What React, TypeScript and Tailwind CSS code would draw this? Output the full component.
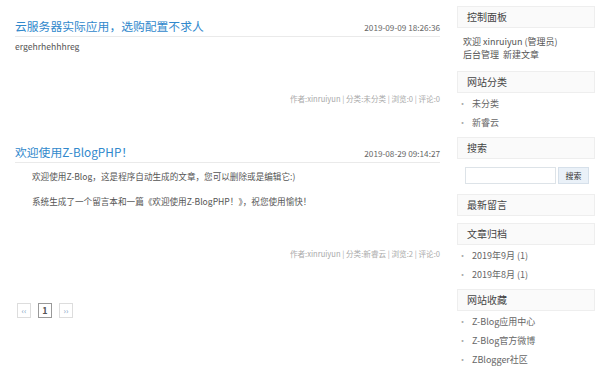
import React from "react";

const posts = [
  {
    title: "云服务器实际应用，选购配置不求人",
    date: "2019-09-09 18:26:36",
    body: ["ergehrhehhhreg"],
    indent: false,
    meta: "作者:xinruiyun | 分类:未分类 | 浏览:0 | 评论:0",
  },
  {
    title: "欢迎使用Z-BlogPHP！",
    date: "2019-08-29 09:14:27",
    body: [
      "欢迎使用Z-Blog，这是程序自动生成的文章，您可以删除或是编辑它:)",
      "系统生成了一个留言本和一篇《欢迎使用Z-BlogPHP！》，祝您使用愉快！",
    ],
    indent: true,
    meta: "作者:xinruiyun | 分类:新睿云 | 浏览:2 | 评论:0",
  },
];

function SideHead({ title }: { title: string }) {
  return (
    <div className="h-[22px] border border-[#eeeeee] bg-[#fafafa] pl-[9px] text-[10px] leading-[20px] text-[#444]">
      {title}
    </div>
  );
}

function SideList({ items }: { items: string[] }) {
  return (
    <ul className="pt-[1px] pb-[5px] pl-[1px]">
      {items.map((it) => (
        <li key={it} className="flex h-[19px] items-center text-[9px] text-[#666]">
          <span className="mr-[5px] text-[#aaa]">·</span>
          {it}
        </li>
      ))}
    </ul>
  );
}

export default function App() {
  return (
    <div
      className="flex h-[371px] w-[611px] bg-white"
      style={{ fontFamily: '"Noto Sans CJK SC", "Liberation Sans", sans-serif' }}
    >
      {/* Main column */}
      <main className="w-[440px] pl-[15px] pt-[17px]">
        {posts.map((p, i) => (
          <article key={i} className={i === 0 ? "mb-[38px]" : "mb-[43px]"}>
            <header className="flex h-[20px] items-start justify-between border-b border-[#eaeaea]">
              <h2 className="text-[11.8px] leading-[18px] text-[#3088cc]">{p.title}</h2>
              <span className="pt-[3px] text-[8.2px] leading-[14px] text-[#666]">{p.date}</span>
            </header>
            <div className={p.indent ? "pl-[17px] pt-[6px]" : "pt-[2px]"}>
              {p.body.map((b, j) => (
                <p
                  key={j}
                  className={
                    "text-[8.6px] leading-[14px] text-[#555] " +
                    (p.indent && j === 0 ? "mb-[11px]" : "")
                  }
                >
                  {b}
                </p>
              ))}
            </div>
            <div className="mt-[40px] text-right text-[7.6px] leading-[12px] text-[#aaa]">
              {p.meta}
            </div>
          </article>
        ))}

        {/* Pagination */}
        <div className="flex gap-[7px] pl-[2px]">
          <span className="flex h-[15px] w-[14px] items-center justify-center border border-[#dddddd] text-[8px] text-[#7a9cc0]">
            ‹‹
          </span>
          <span className="flex h-[15px] w-[14px] items-center justify-center border border-[#999] text-[9px] font-bold text-[#555]">
            1
          </span>
          <span className="flex h-[15px] w-[14px] items-center justify-center border border-[#dddddd] text-[8px] text-[#7a9cc0]">
            ››
          </span>
        </div>
      </main>

      {/* Sidebar */}
      <aside className="ml-[17px] w-[138px] pt-[6px]">
        <SideHead title="控制面板" />
        <div className="pt-[7px] pb-[10px] pl-[6px] text-[9px] leading-[13px] text-[#555]">
          <div>欢迎 xinruiyun (管理员)</div>
          <div className="space-x-[4px]">
            <span>后台管理</span>
            <span>新建文章</span>
          </div>
        </div>

        <SideHead title="网站分类" />
        <SideList items={["未分类", "新睿云"]} />

        <SideHead title="搜索" />
        <div className="flex gap-[2px] pl-[8px] pt-[8px] pb-[10px]">
          <input className="h-[17px] w-[91px] border border-[#dde3e8] bg-white outline-none" />
          <button className="h-[17px] w-[31px] border border-[#d6e0ea] bg-[#eaf1f8] text-[8px] text-[#333]">
            搜索
          </button>
        </div>

        <SideHead title="最新留言" />
        <div className="h-[7px]" />

        <SideHead title="文章归档" />
        <SideList items={["2019年9月 (1)", "2019年8月 (1)"]} />

        <SideHead title="网站收藏" />
        <SideList items={["Z-Blog应用中心", "Z-Blog官方微博", "ZBlogger社区"]} />
      </aside>
    </div>
  );
}
